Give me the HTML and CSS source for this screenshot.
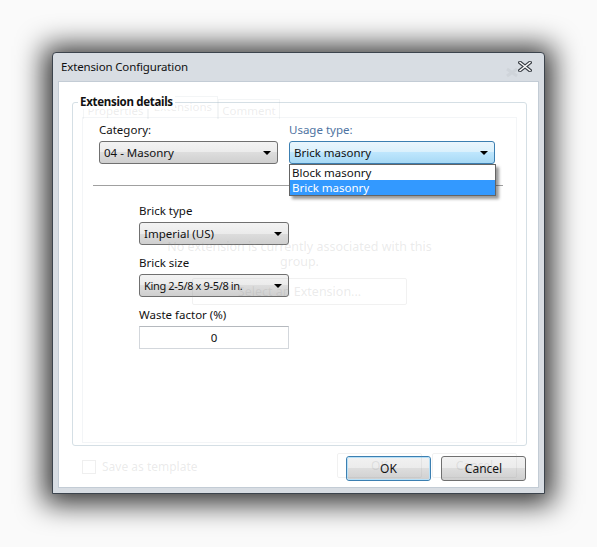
FILE: index.html
```html
<!DOCTYPE HTML>
<html>
    <head>
        <title>Extension Configuration</title>
        <link rel="stylesheet" href="styles.css">
    </head>

    <body>
        <div class="window-shadow"></div>
        <div class="window">
            <div class="titlebar">
                <span class="title">Extension Configuration</span>
                <!-- faint leftover of the close glyph -->
                <svg class="close-ghost" width="14" height="11" viewBox="0 0 14 11">
                    <path d="M2 2 L12 9 M12 2 L2 9" stroke="#cfd4da" stroke-width="3" fill="none"/>
                </svg>
                <svg class="close" width="14" height="11" viewBox="0 0 14 11">
                    <path d="M2 1.5 L12 9.5 M12 1.5 L2 9.5" stroke="#3a3f46" stroke-width="3.6" stroke-linecap="square" fill="none"/>
                    <path d="M2 1.5 L12 9.5 M12 1.5 L2 9.5" stroke="#ffffff" stroke-width="1.4" stroke-linecap="square" fill="none"/>
                </svg>
            </div>

            <div class="client">
                <div class="group">
                    <!-- tabs of the previous page, still fading out -->
                    <div class="ghost-tabs">
                        <div class="ghost-tab t1">Properties</div>
                        <div class="ghost-tab t2">Extensions</div>
                        <div class="ghost-tab t3">Comment</div>
                    </div>

                    <div class="group-title">Extension details</div>

                    <div class="top-row">
                        <div class="field cat">
                            <label>Category:</label>
                            <div class="combo">04 - Masonry<span class="arrow"></span></div>
                        </div>
                        <div class="field usage">
                            <label class="accent">Usage type:</label>
                            <div class="combo hot">Brick masonry<span class="arrow"></span></div>
                            <div class="drop-shadow"></div>
                            <ul class="dropdown">
                                <li>Block masonry</li>
                                <li class="sel">Brick masonry</li>
                            </ul>
                        </div>
                    </div>

                    <div class="sep"></div>

                    <div class="brick">
                        <div class="field">
                            <label>Brick type</label>
                            <div class="combo">Imperial (US)<span class="arrow"></span></div>
                        </div>
                        <div class="field">
                            <label>Brick size</label>
                            <div class="combo tight">King 2-5/8 x 9-5/8 in.<span class="arrow"></span></div>
                        </div>
                        <div class="field">
                            <label>Waste factor (%)</label>
                            <div class="textbox">0</div>
                        </div>
                    </div>

                    <div class="ghost-panel">
                        <p class="ghost-msg">No extension is currently associated with this<br>group.</p>
                        <div class="ghost-btn wide">Select an Extension...</div>
                    </div>
                </div>

                <div class="footer">
                    <button class="btn default">OK</button>
                    <button class="btn">Cancel</button>
                    <div class="ghost-check"><span class="box"></span>Save as template</div>
                    <div class="ghost-btns">
                        <div class="ghost-btn">OK</div>
                        <div class="ghost-btn">Cancel</div>
                    </div>
                </div>
            </div>
        </div>
    </body>
</html>
```

FILE: styles.css
```css
body {
    margin: 0;
    background: #fafafa;
    font-family: "Segoe UI", "Noto Sans", sans-serif;
    font-size: 11.5px;
    color: #111;
}

/* soft drop shadow under the frame */
.window-shadow {
    position: absolute;
    left: 44px;
    top: 46px;
    width: 509px;
    height: 458px;
    background: rgba(0, 0, 0, 0.8);
    filter: blur(14px);
}

.window {
    position: relative;
    width: 491px;
    height: 440px;
    margin: 52px 0 0 52px;
    border: 1px solid #3c444d;
    border-radius: 4px 4px 0 0;
    background: #d8dde3;
}

.titlebar {
    position: relative;
    height: 28px;
    display: flex;
    align-items: center;
    padding-left: 8px;
}
.title {
    margin-top: -2px;
    letter-spacing: -0.15px;
}
.close {
    position: absolute;
    right: 12px;
    top: 8px;
}
.close-ghost {
    position: absolute;
    right: 25px;
    top: 14px;
}

.client {
    position: relative;
    height: 407px;
    margin: 0 5px;
    background: #fff;
    border: 1px solid #c3ccd5;
    padding: 20px 0 0 13px;
    box-sizing: border-box;
}

/* group box */
.group {
    position: relative;
    width: 455px;
    height: 344px;
    box-sizing: border-box;
    border: 1px solid #d5dfe5;
    border-radius: 3px;
}
.group-title {
    position: relative;
    width: fit-content;
    margin: -8px 0 2px 5px;
    padding: 0 2px;
    background: #fff;
    font-weight: bold;
    letter-spacing: -0.3px;
    line-height: 14px;
}

/* fields */
.top-row {
    display: flex;
    gap: 11px;
    margin: 13px 0 0 26px;
}
.field {
    position: relative;
    display: flex;
    flex-direction: column;
}
.field label {
    line-height: 15px;
    margin-bottom: 4px;
}
.field.cat {
    width: 179px;
}
.field.usage {
    width: 206px;
}
.accent {
    color: #4e73a1;
}

.combo {
    position: relative;
    height: 23px;
    line-height: 21px;
    padding-left: 4px;
    box-sizing: border-box;
    border: 1px solid #707070;
    border-radius: 3px;
    background: linear-gradient(#f3f3f3, #ebebeb 50%, #dddddd 50%, #cfcfcf);
    white-space: nowrap;
}
.combo.tight {
    font-size: 11px;
    letter-spacing: -0.35px;
}
.combo.hot {
    border-color: #3c7fb1;
    background: linear-gradient(#eaf6fd, #d9f0fc 50%, #bee6fd 50%, #a7d9f5);
}
.arrow {
    position: absolute;
    right: 6px;
    top: 9px;
    border-left: 4px solid transparent;
    border-right: 4px solid transparent;
    border-top: 4px solid #000;
}

.drop-shadow {
    position: absolute;
    left: 3px;
    top: 45px;
    width: 207px;
    height: 32px;
    background: rgba(0, 0, 0, 0.4);
    filter: blur(1.5px);
}
.dropdown {
    position: absolute;
    left: 0;
    top: 42px;
    width: 207px;
    margin: 0;
    padding: 0;
    list-style: none;
    background: #fff;
    border: 1px solid #646464;
    box-sizing: border-box;
}
.dropdown li {
    height: 15px;
    line-height: 15px;
    padding-left: 2px;
}
.dropdown li.sel {
    background: #3399ff;
    color: #fff;
}

.sep {
    width: 410px;
    height: 1px;
    margin: 21px 0 0 20px;
    background: #a0a0a0;
}

.brick {
    display: flex;
    flex-direction: column;
    gap: 10px;
    width: 150px;
    margin: 17px 0 0 66px;
}
.textbox {
    height: 23px;
    line-height: 21px;
    box-sizing: border-box;
    border: 1px solid #d3d7dc;
    border-top-color: #b5b9be;
    text-align: center;
}

/* leftovers of the previous tab page, barely visible */
.ghost-tabs {
    position: absolute;
    left: 10px;
    top: -7px;
    display: flex;
    align-items: flex-end;
    color: rgba(160, 160, 160, 0.2);
}
.ghost-tab {
    height: 20px;
    line-height: 21px;
    text-align: center;
    border: 1px solid rgba(160, 170, 180, 0.12);
    border-bottom: none;
    box-sizing: border-box;
}
.ghost-tab.t1 { width: 65px; }
.ghost-tab.t2 { width: 70px; height: 23px; line-height: 19px; }
.ghost-tab.t3 { width: 62px; }
.ghost-panel {
    position: absolute;
    left: 9px;
    top: 14px;
    width: 435px;
    height: 326px;
    border: 1px solid rgba(160, 175, 190, 0.12);
    box-sizing: border-box;
    color: rgba(150, 150, 150, 0.2);
    text-align: center;
}
.ghost-msg {
    margin: 121px 0 0;
    line-height: 15px;
    font-size: 12.5px;
}
.ghost-btn {
    border: 1px solid rgba(150, 150, 150, 0.13);
    border-radius: 2px;
    color: rgba(150, 150, 150, 0.2);
    text-align: center;
    box-sizing: border-box;
}
.ghost-btn.wide {
    width: 215px;
    height: 27px;
    line-height: 25px;
    margin: 9px 0 0 109px;
    font-size: 12.5px;
}

/* bottom bar */
.footer {
    position: relative;
    display: flex;
    justify-content: flex-end;
    gap: 10px;
    margin: 10px 12px 0 0;
}
.btn {
    width: 85px;
    height: 25px;
    padding: 0;
    border: 1px solid #707070;
    border-radius: 3px;
    background: linear-gradient(#f2f2f2, #ebebeb 50%, #dddddd 50%, #cfcfcf);
    font-family: inherit;
    font-size: 12px;
    color: #111;
}
.btn.default {
    border-color: #3c7fb1;
    outline: 1px solid #b8e0f7;
    outline-offset: -2px;
}
.ghost-check {
    position: absolute;
    left: 10px;
    top: 2px;
    display: flex;
    align-items: center;
    gap: 6px;
    color: rgba(150, 150, 150, 0.2);
    font-size: 12px;
}
.ghost-check .box {
    width: 12px;
    height: 12px;
    border: 1px solid rgba(150, 150, 150, 0.15);
}
.ghost-btns {
    position: absolute;
    right: 9px;
    top: -3px;
    display: flex;
    gap: 10px;
}
.ghost-btns .ghost-btn {
    width: 85px;
    height: 25px;
    line-height: 23px;
    font-size: 12px;
}
```
